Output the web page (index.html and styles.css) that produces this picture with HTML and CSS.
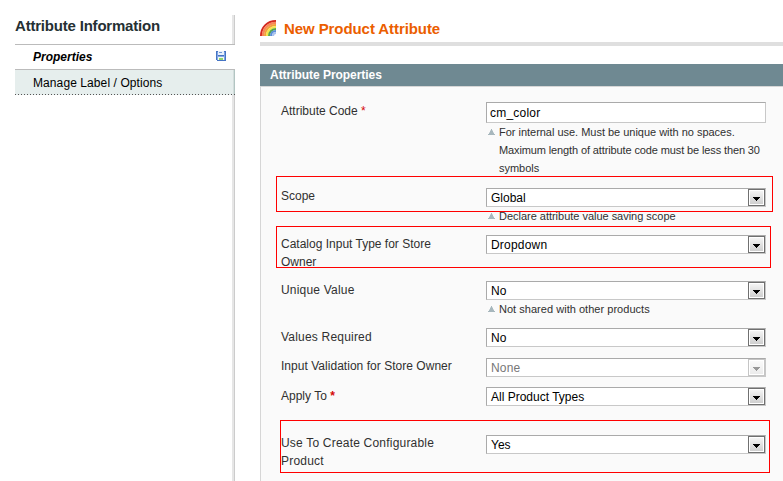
FILE: index.html
```html
<!DOCTYPE html>
<html lang="en">
<head>
<meta charset="utf-8">
<title>New Product Attribute</title>
<link rel="stylesheet" href="styles.css">
</head>
<body>
<svg class="defs" width="0" height="0">
  <defs>
    <linearGradient id="face" x1="0" y1="0" x2="0" y2="1"><stop offset="0" stop-color="#f4f4f4"/><stop offset="1" stop-color="#cfcfcf"/></linearGradient>
    <symbol id="arrow" viewBox="0 0 17 17">
      <rect x=".5" y=".5" width="16" height="16" fill="#fff" stroke="#707070"/>
      <rect x="2" y="2" width="13" height="13" fill="url(#face)"/>
      <path d="M5 8h7v1h-1v1h-1v1H9v1H8v-1H7v-1H6V9H5z" fill="#000"/>
    </symbol>
    <symbol id="note" viewBox="0 0 7 6"><path d="M3 0h1v1h.5v1H5v1h.5v1H6v1h1v1H0V5h1V4h.5V3H2V2h.5V1H3z" fill="#a7b7bd"/></symbol>
  </defs>
</svg>
<div class="page">
  <aside class="sidebar">
    <h3>Attribute Information</h3>
    <div class="tab active"><span>Properties</span>
      <svg class="save" width="10" height="10" viewBox="0 0 10 10" shape-rendering="crispEdges"><path d="M0 0h10v10H1V9H0z" fill="#4674c4"/><path d="M1 1h1v8H1zM8 1h1v8H8z" fill="#7fa5e3"/><path d="M2 0h6v4H2z" fill="#e9f1fc"/><path d="M3 1h3v1H3z" fill="#7298d5"/><path d="M1 5h8v1H1z" fill="#86abe7"/><path d="M2 6h6v3H2z" fill="#f3f8ef"/><path d="M3 7h4v2H3z" fill="#8ed46b"/></svg>
    </div>
    <div class="tab"><span class="wide">Manage Label / Options</span></div>
    <div class="rest"></div>
  </aside>
  <main class="content">
    <header class="title">
      <svg width="17" height="17" viewBox="0 0 17 17" fill="none"><path d="M1 17C1 8 7.5 2 16 2" stroke="#d3281f" stroke-width="2"/><path d="M3 17C3 9.5 8.5 4 16 4" stroke="#f7875a" stroke-width="2.4"/><path d="M5 17C5 10.5 9.8 6 16 6" stroke="#f2a23a" stroke-width="2"/><path d="M7 17c0-5 4-9 9-9" stroke="#f3e64c" stroke-width="2.2"/><path d="M9 17c0-4 3-7 7-7" stroke="#58a847" stroke-width="2"/><path d="M11 17c0-3 2-5 5-5" stroke="#5b8fd8" stroke-width="2"/><path d="M13 17c0-2 1-3 3-3" stroke="#a9c2ee" stroke-width="2"/></svg>
      <h1>New Product Attribute</h1>
    </header>
    <h2>Attribute Properties</h2>
    <form class="panel">
      <div class="row r-code">
        <label>Attribute Code <em>*</em></label>
        <div class="field"><div class="input">cm_color</div>
          <div class="note"><svg width="7" height="6"><use href="#note"/></svg><p>For internal use. Must be unique with no spaces.<br><span class="narrow">Maximum length of attribute code must be less then 30</span><br>symbols</p></div></div>
      </div>
      <div class="row r-scope">
        <label>Scope</label>
        <div class="field low"><div class="select"><span>Global</span><svg width="17" height="17"><use href="#arrow"/></svg></div>
          <div class="note"><svg width="7" height="6"><use href="#note"/></svg><p>Declare attribute value saving scope</p></div></div>
        <i class="mark m-scope"></i>
      </div>
      <div class="row r-type">
        <label>Catalog Input Type for Store<br>Owner</label>
        <div class="field"><div class="select"><span class="wider">Dropdown</span><svg width="17" height="17"><use href="#arrow"/></svg></div></div>
        <i class="mark m-type"></i>
      </div>
      <div class="row r-unique">
        <label class="wider">Unique Value</label>
        <div class="field"><div class="select"><span class="wider">No</span><svg width="17" height="17"><use href="#arrow"/></svg></div>
          <div class="note"><svg width="7" height="6"><use href="#note"/></svg><p class="roomy">Not shared with other products</p></div></div>
      </div>
      <div class="row r-required">
        <label class="wider">Values Required</label>
        <div class="field"><div class="select"><span class="wider">No</span><svg width="17" height="17"><use href="#arrow"/></svg></div></div>
      </div>
      <div class="row r-valid">
        <label class="roomy">Input Validation for Store Owner</label>
        <div class="field low"><div class="select off"><span class="wider">None</span><svg width="17" height="17"><use href="#arrow"/></svg></div></div>
      </div>
      <div class="row r-apply">
        <label>Apply To <em class="bold">*</em></label>
        <div class="field"><div class="select"><span>All Product Types</span><svg width="17" height="17"><use href="#arrow"/></svg></div></div>
      </div>
      <div class="row r-config">
        <label class="wider">Use To Create Configurable<br>Product</label>
        <div class="field low"><div class="select"><span>Yes</span><svg width="17" height="17"><use href="#arrow"/></svg></div></div>
        <i class="mark m-config"></i>
      </div>
    </form>
  </main>
</div>
</body>
</html>
```
FILE: styles.css
```css
* { box-sizing: border-box; }
body { margin: 0; background: #fff; color: #303030; font: 12px/18px "Liberation Sans", Arial, sans-serif; overflow: hidden; }
h1, h2, h3, p { margin: 0; }
.defs { display: block; height: 0; }
.page { display: flex; height: 481px; }

.sidebar { width: 220px; margin: 15px 0 0 15px; display: flex; flex-direction: column; flex: none; }
.sidebar h3 { height: 30px; font-size: 15px; line-height: 21px; letter-spacing: -.2px; color: #253033; white-space: nowrap; border-bottom: 1px solid #bbb; background: linear-gradient(90deg, #e6e6e6 2px, #ccc 2px) right / 3px 100% no-repeat; }
.tab { height: 25px; padding: 0 9px 0 18px; line-height: 26px; display: flex; color: #000; background: repeating-linear-gradient(90deg, #555 0 1px, transparent 1px 3px) left bottom / 100% 1px no-repeat, linear-gradient(90deg, #d3dddc 1px, #b2c5c2 1px) right / 2px 100% no-repeat, #e6eeed; }
.tab.active { background: #fff; font-weight: bold; font-style: italic; border-bottom: 1px solid #bbb; line-height: 24px; }
.save { margin: 6px 0 0 auto; }
.rest { flex: 1; background: linear-gradient(90deg, #e6e6e6 2px, #ccc 2px) right / 3px 100% no-repeat; }

.content { flex: 1; margin-left: 25px; min-width: 0; }
.title { height: 46px; padding-top: 19px; border-bottom: 4px solid #dfdfdf; display: flex; gap: 7px; }
.title h1 { font-size: 15px; line-height: 20px; letter-spacing: -.08px; color: #eb5e00; }
.content h2 { margin-top: 18px; height: 22px; padding-left: 10px; font-size: 12px; line-height: 22px; letter-spacing: -.04px; color: #fff; background: #6f8992; }
.panel { height: 395px; padding: 15px 0 0 20px; background: #fafafa; border: solid #d6d6d6; border-width: 1px 0 0 1px; }

.row { display: grid; grid-template-columns: 205px 280px; position: relative; }
.r-code { height: 85px; }
.r-scope { height: 48px; }
.r-type { height: 46px; }
.r-unique { height: 47px; }
.r-required { height: 29px; }
.r-valid { height: 30px; }
.r-apply { height: 47px; }
.r-config { height: 46px; }
label { white-space: nowrap; }
em { color: #d40707; font-style: normal; }
.bold { font-weight: bold; }
.low { padding-top: 1px; }
.input, .select { border: 1px solid; border-color: #aaa #c8c8c8 #c8c8c8 #aaa; background: #fff; color: #000; }
.input { height: 21px; padding-left: 3px; line-height: 20px; letter-spacing: .22px; }
.select { height: 19px; padding-left: 4px; line-height: 18px; display: flex; justify-content: space-between; }
.off span { color: #777; }
.off svg { opacity: .4; }
.note { display: flex; gap: 4px; padding-left: 2px; font-size: 11px; letter-spacing: -.02px; white-space: nowrap; }
.note svg { margin-top: 6px; flex: none; }
.narrow { letter-spacing: -.12px; }
.roomy { letter-spacing: .03px; }
.wide { letter-spacing: .09px; }
.wider { letter-spacing: .2px; }

.mark { position: absolute; border: 1px solid #f00; pointer-events: none; }
.m-scope { left: -5px; top: -11px; width: 497px; height: 36px; }
.m-type { left: -5px; top: -9px; width: 495px; height: 42px; }
.m-config { left: -1px; top: -14px; width: 490px; height: 53px; }
```
